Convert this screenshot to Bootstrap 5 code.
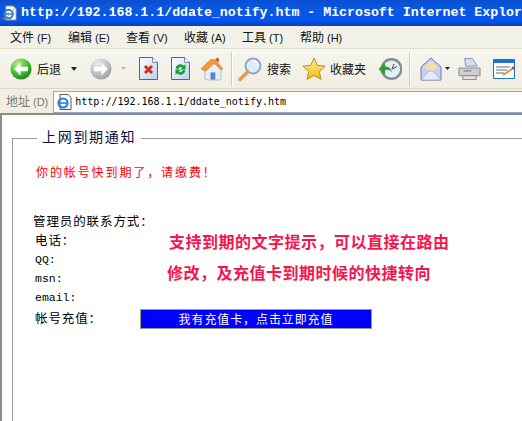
<!DOCTYPE html>
<html lang="zh"><head><meta charset="utf-8"><title>ddate_notify</title>
<link href="https://cdn.jsdelivr.net/npm/bootstrap@5.3.0/dist/css/bootstrap.min.css" rel="stylesheet">
<style>
html,body{height:421px;overflow:hidden;background:#fff}
body{font-family:"Noto Sans CJK SC","Liberation Sans",sans-serif;font-size:12px;color:#000;line-height:1}
.win{width:522px;height:421px;display:flex;flex-direction:column;overflow:hidden}
.tbar{height:26px;flex:none;background:linear-gradient(#0a4fd0,#0a58e0 30%,#0555ee 75%,#0a40c4);color:#fff;font-family:"Liberation Mono",monospace;font-weight:700;font-size:13.25px;white-space:nowrap;padding-left:2px;gap:4px}
.mbar{height:23px;flex:none;background:#f2f1e8;border-bottom:1px solid #e4e1d3;padding-left:10px;font-size:12px;color:#111}
.mitem{width:58px;white-space:nowrap}
.pkey{font-family:"Liberation Sans",sans-serif;font-size:11px;margin-left:3px}
.tools{height:40px;flex:none;background:linear-gradient(#f6f5ee,#f1efe4);border-bottom:1px solid #dcd8c4;padding-left:10px;color:#111;font-size:12px;white-space:nowrap}
.sep{width:1px;height:34px;background:#cfcbb8;box-shadow:1px 0 #fff}
.s3{margin-left:3px}.s4{margin-left:4px}.s5{margin-left:5px}.s6{margin-left:6px}.s7{margin-left:7px}.s8{margin-left:8px}.s9{margin-left:9px}.s10{margin-left:10px}.s11{margin-left:11px}.s12{margin-left:12px}.s13{margin-left:13px}.s14{margin-left:14px}
.tools svg{flex:none}
.addr{height:24px;flex:none;background:#f1efe4;padding-left:6px;color:#7d7a6c;font-size:12px;white-space:nowrap;padding-top:1px}
.addr .pkey{color:#7d7a6c}
.field{flex:1;height:22px;margin-left:5px;background:#fff;border:1px solid #8fa8cc;border-right:0;font-family:"DejaVu Sans Mono",monospace;font-size:10px;color:#000;padding-left:2px;gap:3px}
.pane{flex:1;min-height:0;border-top:2px solid #8f8c7f;border-left:2px solid #8f8c7f;position:relative;background:#fff}
.frame{margin:23px 0 0 10px;border:1px solid #9a9a9a;border-right:0;height:300px;padding:0 0 0 20px;position:relative}
.legend{position:absolute;top:-10px;left:24px;background:#fff;padding:0 5px;font-size:14px;color:#0c0c3c;letter-spacing:1.7px}
.warn{color:#f00;font-size:12px;margin:27px 0 0 3px;letter-spacing:1.9px;white-space:nowrap}
.contact{margin-top:34px;font-size:12.5px;letter-spacing:.9px}
.mono{font-family:"Liberation Mono",monospace;font-size:11.5px;letter-spacing:0}
.crow{height:19px;padding-left:2px;display:flex;align-items:center;white-space:nowrap}
.crow.first{padding-left:0}
.crow.last{height:21px;margin-top:1px}
.promo{position:absolute;left:165px;top:111px;font-weight:700;color:#f4164f;font-size:16px;letter-spacing:.5px;line-height:31px;white-space:nowrap}
.promo .l1{margin-left:2px}
.paybtn{background:#00f;color:#fff;border:1px solid #9a9a80;width:232px;height:20px;margin-left:38px;font-size:12px;letter-spacing:.9px;display:flex;align-items:center;justify-content:center;text-decoration:none}
</style></head><body>
<div class="win">
<div class="tbar d-flex align-items-center">
<svg width="16" height="16" viewBox="0 0 16 16"><path d="M4 .5h8l3 3v12H4z" fill="#fff" stroke="#888"/><circle cx="7" cy="9" r="4.500" fill="none" stroke="#2a7de0" stroke-width="2.200"/><path d="M3 9h8" stroke="#2a7de0" stroke-width="1.600"/><path d="M.5 14C4 14 11 8 13 3" stroke="#e8a000" fill="none"/></svg>
<span>http://192.168.1.1/ddate_notify.htm - Microsoft Internet Explor</span></div>
<div class="mbar d-flex align-items-center">
<span class="mitem">文件<span class="pkey">(F)</span></span><span class="mitem">编辑<span class="pkey">(E)</span></span><span class="mitem">查看<span class="pkey">(V)</span></span><span class="mitem">收藏<span class="pkey">(A)</span></span><span class="mitem">工具<span class="pkey">(T)</span></span><span class="mitem">帮助<span class="pkey">(H)</span></span></div>
<div class="tools d-flex align-items-center">
<svg width="22" height="22" viewBox="0 0 24 24"><defs><radialGradient id="g" cx=".35" cy=".25" r=".85"><stop offset="0" stop-color="#b4f088"/><stop offset=".6" stop-color="#3eb52e"/><stop offset="1" stop-color="#137a1a"/></radialGradient><radialGradient id="s" cx=".35" cy=".25" r=".85"><stop offset="0" stop-color="#ececec"/><stop offset="1" stop-color="#9a9a9a"/></radialGradient><linearGradient id="d" x1="0" y1="0" x2="1" y2="1"><stop offset="0" stop-color="#fff"/><stop offset="1" stop-color="#bcd0f0"/></linearGradient><linearGradient id="y" x1="0" y1="0" x2="0" y2="1"><stop offset="0" stop-color="#fff2a0"/><stop offset="1" stop-color="#f4b810"/></linearGradient></defs><circle cx="12" cy="12" r="11.500" fill="url(#g)"/><path d="M4.500 12L11.500 5v4.500h8v5h-8V19z" fill="#fff"/></svg>
<span class="s5">后退</span>
<svg class="s10" width="6" height="4"><path d="M0 0h6L3 4z" fill="#222"/></svg>
<svg class="s13" width="22" height="22" viewBox="0 0 24 24"><circle cx="12" cy="12" r="11.500" fill="url(#s)"/><path d="M19.500 12L12.500 5v4.500h-8v5h8V19z" fill="#fff"/></svg>
<svg class="s9" width="5" height="3"><path d="M0 0h5L2.500 3z" fill="#bbb"/></svg>
<svg class="s13" width="19" height="23" viewBox="0 0 19 23"><path d="M.5.5h13l5 5v17H.5z" fill="url(#d)" stroke="#4a62a8"/><path d="M13.500.5v5h5" fill="#fff" stroke="#4a62a8" stroke-width=".7"/><path d="M6 9l7 7M13 9l-7 7" stroke="#e02a1c" stroke-width="3"/></svg>
<svg class="s13" width="19" height="23" viewBox="0 0 19 23"><path d="M.5.5h13l5 5v17H.5z" fill="url(#d)" stroke="#4a62a8"/><path d="M13.500.5v5h5" fill="#fff" stroke="#4a62a8" stroke-width=".7"/><path d="M4.500 11.500a5 5 0 0 1 8.500-2.800L14.500 7v5.500h-5l1.800-1.900a2.800 2.800 0 0 0-4.300 1.400zM14.500 13.500a5 5 0 0 1-8.500 2.800L4.500 18v-5.500h5l-1.800 1.900a2.800 2.800 0 0 0 4.300-1.400z" fill="#16a02c"/></svg>
<svg class="s10" width="23" height="24" viewBox="0 0 24 24"><path d="M5 11v11.500l4 1h12l1-2V12l-9-7z" fill="#e6eef8" stroke="#9ab" stroke-width=".7"/><path d="M1 12L11 2h5l8 10-2 1-7-7-9 8-3-1z" fill="#f39a34" stroke="#cf7520" stroke-width=".6"/><path d="M17 3V.5h2.500V5z" fill="#c0452c"/><path d="M11 23v-7.500h5V23z" fill="#5d86c4"/></svg>
<span class="sep s8"></span>
<svg class="s6" width="24" height="26" viewBox="0 0 24 26"><circle cx="15" cy="10" r="7.500" fill="#dceefc" stroke="#8aa8c8" stroke-width="2"/><path d="M14 4.500a5.500 5.500 0 0 1 6 5" stroke="#fff" stroke-width="1.500" fill="none"/><path d="M9.500 16L2 23.500" stroke="#e09c50" stroke-width="3.600" stroke-linecap="round"/></svg>
<span class="s5">搜索</span>
<svg class="s11" width="24" height="24" viewBox="0 0 24 24"><path d="M12 1l3.300 7.300 7.900.9-5.900 5.400 1.700 7.800L12 18.500l-7 3.900 1.700-7.800L.8 9.200l7.900-.9z" fill="url(#y)" stroke="#b8901a"/></svg>
<span class="s4">收藏夹</span>
<svg class="s12" width="24" height="24" viewBox="0 0 24 24"><circle cx="13.500" cy="12" r="9.800" fill="#e6f0f4" stroke="#7f8f96" stroke-width="2.400"/><path d="M14 12l5-2.500M14 12l2-5" stroke="#345" stroke-width="1"/><path d="M.5 12L7 6v3.500c3 0 6 1.500 7 5.500-2-2-4-2.500-7-2V18z" fill="#2fa030"/></svg>
<span class="sep s7"></span>
<svg class="s10" width="22" height="24" viewBox="0 0 22 24"><path d="M1 10L11 1l10 9v13H1z" fill="#c4d2f2" stroke="#6a78b8"/><path d="M4 10L11 4l7 6-7 5z" fill="#f6dfa8"/><path d="M1 23l8-9h4l8 9z" fill="#e4eafa" stroke="#8a98c8" stroke-width=".6"/></svg>
<svg class="s3" width="5" height="3"><path d="M0 0h5L2.500 3z" fill="#222"/></svg>
<svg class="s8" width="23" height="24" viewBox="0 0 24 24"><path d="M7 1h8l5 8H8z" fill="#cfe0f4" stroke="#8a9ab0"/><path d="M1 11h22v8H1z" fill="#cfcfcf" stroke="#8a8a8a"/><path d="M5 19h14v4H5z" fill="#e4e4e4" stroke="#888"/><path d="M6 14h8" stroke="#666"/></svg>
<svg class="s12" width="22" height="20" viewBox="0 0 22 20"><path d="M.5.5h21v19H.5z" fill="#fff" stroke="#1f6fd0"/><path d="M1 1h20v3H1z" fill="#1f6fd0"/><path d="M3 8h14M3 11h11M3 14h8" stroke="#667"/><path d="M10 16l9-6" stroke="#d89030" stroke-width="2"/><circle cx="20" cy="9" r="1.500" fill="#e03020"/></svg>
</div>
<div class="addr d-flex align-items-center"><span>地址<span class="pkey">(D)</span></span>
<div class="field d-flex align-items-center"><svg width="16" height="16" viewBox="0 0 16 16"><path d="M4 .5h8l3 3v12H4z" fill="#fff" stroke="#555"/><circle cx="7" cy="9" r="4.500" fill="none" stroke="#2a7de0" stroke-width="2.200"/><path d="M3 9h8" stroke="#2a7de0" stroke-width="1.600"/></svg><span>http://192.168.1.1/ddate_notify.htm</span></div></div>
<div class="pane">
<div class="frame">
<div class="legend">上网到期通知</div>
<div class="warn">你的帐号快到期了，请缴费！</div>
<div class="contact">
<div class="crow first">管理员的联系方式：</div>
<div class="crow">电话：</div>
<div class="crow mono">QQ:</div>
<div class="crow mono">msn:</div>
<div class="crow mono">email:</div>
<div class="crow last">帐号充值：<a class="paybtn" href="#">我有充值卡，点击立即充值</a></div>
</div></div>
<div class="promo"><div class="l1">支持到期的文字提示，可以直接在路由</div><div>修改，及充值卡到期时候的快捷转向</div></div>
</div></div>
</body></html>
